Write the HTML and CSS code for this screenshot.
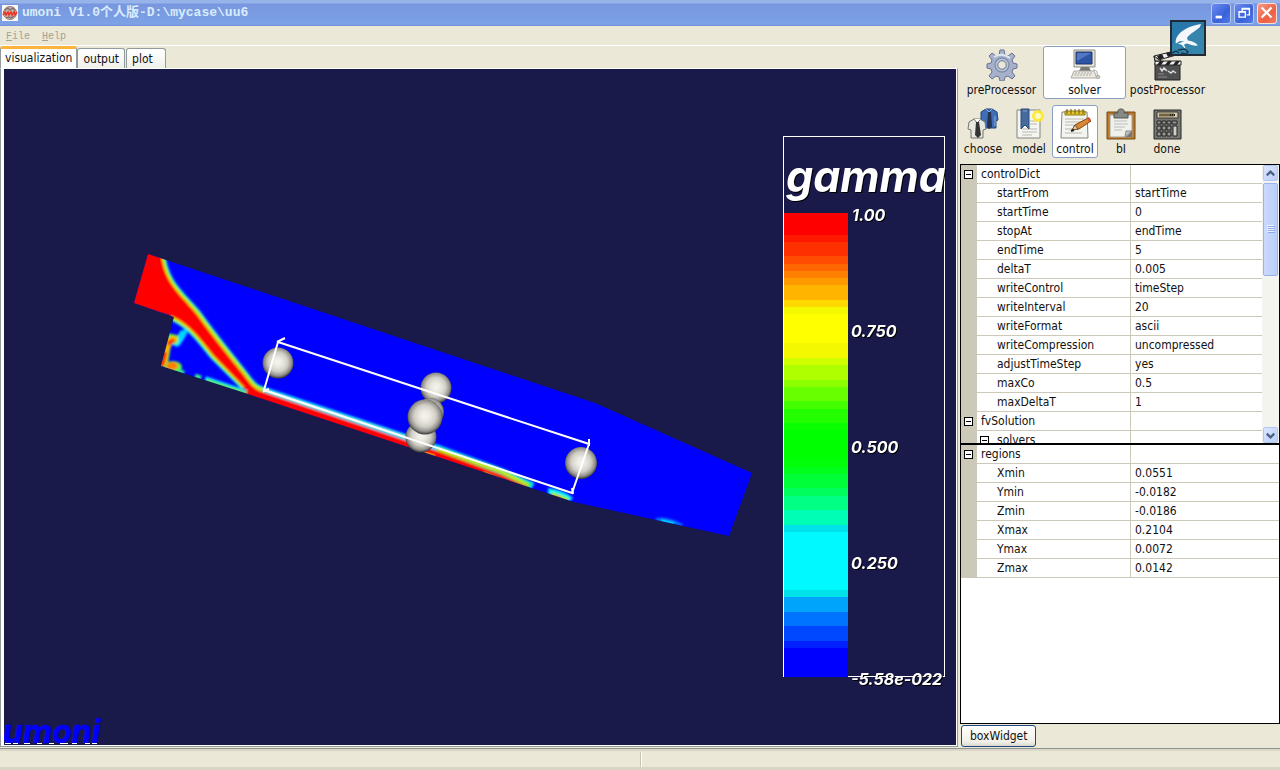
FILE: index.html
```html
<!DOCTYPE html>
<html lang="en">
<head>
<meta charset="utf-8">
<title>umoni V1.0个人版-D:\mycase\uu6</title>
<link rel="stylesheet" href="styles.css">
</head>
<body>
<div class="window">
  <header class="titlebar">
    <svg class="app-icon" viewBox="0 0 16 16" aria-hidden="true">
      <rect width="16" height="16" fill="#fbf6f2"/>
      <circle cx="8" cy="8" r="6.5" fill="#c9b4aa" stroke="#8d807c"/>
      <path d="M3 5l3-2 2 2 3-2 2 3M4 13l3-1 2 1 3-2" fill="none" stroke="#7c6a66" stroke-width="1.3"/>
      <path d="M1 10l2-3 1 3 2-3 1 3 2-3 1 3 2-3 1 3 2-3" fill="none" stroke="#ee3524" stroke-width="1.6"/>
    </svg>
    <h1 class="title">umoni V1.0个人版-D:\mycase\uu6</h1>
    <div class="window-buttons">
      <button class="win-btn" type="button" aria-label="Minimize"><svg viewBox="0 0 20 20"><path d="M4 14.500h7" stroke="#fff" stroke-width="3"/></svg></button>
      <button class="win-btn" type="button" aria-label="Restore"><svg viewBox="0 0 20 20"><path d="M8 8V5h8v7h-3M8 5.500h8M4.500 8.500h7v6h-7zM4 9h8" fill="none" stroke="#fff" stroke-width="1.500"/></svg></button>
      <button class="win-btn win-close" type="button" aria-label="Close"><svg viewBox="0 0 20 20"><path d="M4 4l11 11M15 4L4 15" stroke="#fff" stroke-width="2.400"/></svg></button>
    </div>
  </header>
  <nav class="menubar">
    <button type="button"><u>F</u>ile</button>
    <button type="button"><u>H</u>elp</button>
  </nav>

  <main class="content">
    <section class="notebook">
      <div class="tabs" role="tablist">
        <button class="tab active" type="button" role="tab" aria-selected="true">visualization</button>
        <button class="tab" type="button" role="tab" aria-selected="false">output</button>
        <button class="tab" type="button" role="tab" aria-selected="false">plot</button>
      </div>
      <div class="page">
        <svg class="scene" viewBox="4 69 952 675" preserveAspectRatio="xMinYMin meet">
          <defs>
            <radialGradient id="ball" cx=".5" cy=".47" r=".54">
              <stop offset="0" stop-color="#f4f4f2"/><stop offset=".28" stop-color="#ebe9df"/>
              <stop offset=".58" stop-color="#cfcdc5"/><stop offset=".82" stop-color="#91908b"/><stop offset="1" stop-color="#2c2c2a"/>
            </radialGradient>
            <clipPath id="body"><path d="M148 254L595 403L752 473L729 536L574 502L245 393L161 366L174 317L134 303Z"/></clipPath>
            <filter id="soft"><feGaussianBlur stdDeviation=".8"/></filter>
          </defs>
          <g clip-path="url(#body)">
            <path fill="#00f" d="M130 250h630v300H130z"/>
            <g filter="url(#soft)" stroke-linejoin="round">
              <g fill="none">
                <path d="M162 252C164 284 184 296 199 315C219 343 235 361 250 381Q255 388 263 390L440 449L500 471L533 486M244 387L213 356C200 340 190 325 171 317" stroke="#00d8ff" stroke-width="7"/>
                <path d="M162 252C164 284 184 296 199 315C219 343 235 361 250 381Q255 388 263 390M244 387L213 356C200 340 190 325 171 317M437 449L500 471L531 486" stroke="#2cf060" stroke-width="5"/>
                <path d="M162 252C164 284 184 296 199 315C219 343 235 361 250 381Q255 388 263 390M244 387L213 356C200 340 190 325 171 317M437 449L500 471L528 485" stroke="#d8e800" stroke-width="2.500"/>
              </g>
              <path fill="#f00" d="M138 240L161 252C163 284 183 296 198 316C218 344 234 362 249 382Q255 390 263 392L440 452L500 474L528 487L520 497L380 454L244 408V387L213 355C200 339 190 324 171 316L120 302Z"/>
              <path d="M263 390L434 446" stroke="#8ff4d0" stroke-width="2"/>
              <path d="M424 454L434 457" stroke="#ffe800" stroke-width="3"/>
              <path d="M484 473L514 486" stroke="#ffb400" stroke-width="2"/>
              <path d="M164 367L165 350L169 339L177 343L184 332" fill="none" stroke="#00e8ff" stroke-width="7"/>
              <path d="M163 367L166 348L169 338L178 340" fill="none" stroke="#5cf030" stroke-width="9"/>
              <path d="M163 367L166 350L170 340L177 339" fill="none" stroke="#ffb000" stroke-width="6"/>
              <path d="M162 366L165 352M168 344L174 340" stroke="#ff2800" stroke-width="4"/>
              <path d="M180 338L187 329" stroke="#00cfff" stroke-width="5"/>
              <ellipse cx="173" cy="367" rx="9" ry="6" fill="#60f040"/>
              <ellipse cx="172" cy="366" rx="6" ry="4" fill="#ff8000"/>
              <path d="M178 371L184 373M195 376L201 378" stroke="#30f080" stroke-width="5"/>
              <path d="M205 379L246 393" stroke="#00e0ff" stroke-width="6"/>
              <path d="M206 381L246 394" stroke="#60f000" stroke-width="4"/>
              <path d="M548 491Q560 492 571 500" fill="none" stroke="#00f0ff" stroke-width="6"/>
              <path d="M551 494L568 500" stroke="#a0f000" stroke-width="4"/>
              <path d="M555 496L561 498" stroke="#ff8000" stroke-width="2"/>
              <path d="M656 520Q667 518 682 526" fill="none" stroke="#0070ff" stroke-width="4"/>
              <path d="M661 521L674 524" stroke="#00e0ff" stroke-width="3"/>
            </g>
          </g>
          <circle cx="278" cy="363" r="15.500" fill="url(#ball)"/>
          <circle cx="436" cy="388" r="15.500" fill="url(#ball)"/>
          <circle cx="430" cy="412" r="14" fill="url(#ball)"/>
          <circle cx="421" cy="437" r="15.500" fill="url(#ball)"/>
          <circle cx="425" cy="417" r="17.500" fill="url(#ball)"/>
          <circle cx="581" cy="463" r="16" fill="url(#ball)"/>
          <g fill="none" stroke="#fff" stroke-width="2">
            <path d="M278 342L589 444L572 493L264 390Z"/>
            <path d="M277 342L285 338M589 439V446M264 388V391L269 389M572 488L573 494"/>
          </g>

          <g shape-rendering="crispEdges">
            <rect x="783.500" y="136.500" width="161" height="540" fill="none" stroke="#fff"/>
            <path fill="#f00" d="M784 213h64v22h-64z"/><path fill="#ff1800" d="M784 235h64v7h-64z"/>
            <path fill="#ff3000" d="M784 242h64v14h-64z"/><path fill="#ff4c00" d="M784 256h64v8h-64z"/>
            <path fill="#ff6600" d="M784 264h64v7h-64z"/><path fill="#ff8000" d="M784 271h64v7h-64z"/>
            <path fill="#ff9900" d="M784 278h64v7h-64z"/><path fill="#ffb400" d="M784 285h64v15h-64z"/>
            <path fill="#ffd800" d="M784 300h64v7h-64z"/><path fill="#f4f800" d="M784 307h64v7h-64z"/>
            <path fill="#ff0" d="M784 314h64v29h-64z"/><path fill="#f4f800" d="M784 343h64v15h-64z"/>
            <path fill="#d0ff00" d="M784 358h64v7h-64z"/><path fill="#b0ff00" d="M784 365h64v15h-64z"/>
            <path fill="#8cff00" d="M784 380h64v7h-64z"/><path fill="#68ff00" d="M784 387h64v14h-64z"/>
            <path fill="#44ff00" d="M784 401h64v8h-64z"/><path fill="#24ff00" d="M784 409h64v14h-64z"/>
            <path fill="#0aff00" d="M784 423h64v7h-64z"/><path fill="#0f0" d="M784 430h64v29h-64z"/>
            <path fill="#00ff08" d="M784 459h64v8h-64z"/><path fill="#00ff1c" d="M784 467h64v7h-64z"/>
            <path fill="#00ff38" d="M784 474h64v14h-64z"/><path fill="#00ff5c" d="M784 488h64v8h-64z"/>
            <path fill="#00ff84" d="M784 496h64v14h-64z"/><path fill="#00ffb4" d="M784 510h64v15h-64z"/>
            <path fill="#00e2ea" d="M784 525h64v7h-64z"/><path fill="#00f8ff" d="M784 532h64v58h-64z"/>
            <path fill="#00e2ea" d="M784 590h64v7h-64z"/><path fill="#00a4fa" d="M784 597h64v15h-64z"/>
            <path fill="#0074ff" d="M784 612h64v14h-64z"/><path fill="#0048ff" d="M784 626h64v15h-64z"/>
            <path fill="#0020ff" d="M784 641h64v7h-64z"/><path fill="#00f" d="M784 648h64v29h-64z"/>
          </g>
          <g class="scale-text">
            <text class="scale-title" x="786" y="192">gamma</text>
            <text x="852" y="221">1.00</text>
            <text x="851" y="337">0.750</text>
            <text x="851" y="453">0.500</text>
            <text x="851" y="569">0.250</text>
            <text x="851" y="685">-5.58e-022</text>
          </g>
          <text class="watermark" x="3" y="743">umoni</text>
          <path d="M5 743.500h6M13 743.500h5M24 743.500h6M37 743.500h5M49 743.500h5M60 743.500h8M72 743.500h5M85 743.500h5M92 743.500h5" stroke="#fff"/>
        </svg>
      </div>
    </section>

    <aside class="side">
      <div class="toolbar steps">
        <button class="tool" type="button">
          <svg viewBox="0 0 32 32"><path d="M14 1h4l1 5 3 1 4-3 3 3-3 4 1 3 4 1v4l-4 1-1 3 3 4-3 3-4-3-3 1-1 4h-4l-1-4-3-1-4 3-3-3 3-4-1-3-4-1v-4l4-1 1-3-3-4 3-3 4 3 3-1z" fill="#a6b2cb" stroke="#68748e"/><circle cx="16" cy="16" r="7" fill="#bdc7da" stroke="#8591aa" stroke-width="1.500"/><path d="M8 8q8-5 16 1" stroke="#e0e6f0" stroke-width="2" fill="none"/><circle cx="16" cy="16" r="4.200" fill="#ebe8d8" stroke="#68748e"/></svg>
          <span>preProcessor</span></button>
        <button class="tool selected" type="button" aria-pressed="true">
          <svg viewBox="0 0 32 32"><path d="M5 1h21v17H5z" fill="#e6e4da" stroke="#8d8b82"/><path d="M7 3h16v12H7z" fill="#2d55a5" stroke="#1c3568"/><path d="M8 4h14L8 12z" fill="#5479c2"/><path d="M12 18h8l2 4H10z" fill="#7b7a74"/><path d="M5 22h20l3 7H2z" fill="#ebe9e0" stroke="#aaa89f"/><path d="M6 24h17M5 26h18" stroke="#aaa89f" stroke-dasharray="2 1"/><path d="M24 21q5 0 4 4l2 3" fill="none" stroke="#aaa89f"/><ellipse cx="29" cy="28" rx="2" ry="1.500" fill="#d3d1c7" stroke="#aaa89f"/></svg>
          <span>solver</span></button>
        <button class="tool" type="button">
          <svg viewBox="0 0 32 32"><path d="M3 14h25v17H3z" fill="#505050" stroke="#222"/><path d="M3 12h26v4H3z" fill="#eee" stroke="#222"/><path d="M5 16l3-4h4l-3 4zm8 0l3-4h4l-3 4zm8 0l3-4h4l-3 4z" fill="#222"/><path d="M2 7l25-6 1 4L3 12z" fill="#eee" stroke="#222"/><path d="M5 7l5-2 2 4-5 2zm9-3l4-1 2 4-4 1zm8-2l4-1 1 4-3 1z" fill="#222"/><path d="M2 7l7 5H3z" fill="#bbb" stroke="#222"/><path d="M8 19l2 3 2-3 3 3M16 22l3 2 2-2 3 2" fill="none" stroke="#ddd" stroke-width="1.500"/><path d="M6 25h6M6 28h9" stroke="#8a8a8a"/></svg>
          <span>postProcessor</span></button>
      </div>
      <div class="toolbar tasks">
        <button class="tool" type="button">
          <svg viewBox="0 0 32 32"><path d="M14 4l5-3h6l5 3 1 8-2 1v7H14z" fill="#3e6eb5" stroke="#234779"/><path d="M19 1l3 3 3-3M14 12v7M28 8v10" stroke="#87ace0" fill="none"/><path d="M21 4h3l1 15-3 2-2-2z" fill="#263350"/><path d="M2 14l5-3h6l5 3 1 7-3 1v8H4v-8l-3-1z" fill="#e7e7e2" stroke="#74746e"/><path d="M7 11l3 4 4-4" stroke="#777" fill="#fff"/><path d="M9 14h3l2 13-3 3-3-3z" fill="#333"/></svg>
          <span>choose</span></button>
        <button class="tool" type="button">
          <svg viewBox="0 0 32 32"><path d="M4 2h23v28H4z" fill="#f5f5f1" stroke="#84847c"/><path d="M17 13h7M17 16h7M9 21h15M9 24h15M9 27h10" stroke="#b8b8b3"/><path d="M8 1h8v20l-4-4-4 4z" fill="#466a9e" stroke="#294d7d"/><path d="M10 3h4" stroke="#86a4cb"/><circle cx="25" cy="8" r="6" fill="#ffe82c" opacity=".9"/><circle cx="25" cy="8" r="3" fill="#fffac2"/></svg>
          <span>model</span></button>
        <button class="tool selected" type="button" aria-pressed="true">
          <svg viewBox="0 0 32 32"><path d="M3 4h25l1 26H2z" fill="#f4f4f0" stroke="#84847c"/><path d="M6 3h20v4H6z" fill="#e4c52e" stroke="#917b11"/><path d="M8 1v5M12 1v5M16 1v5M20 1v5M24 1v5" stroke="#685710"/><path d="M6 11h19M6 14h16M6 17h12M6 21h8M6 25h17" stroke="#b9b9b4"/><path d="M13 22l3-5 13-7 3 3-12 8z" fill="#da8733" stroke="#87430f"/><path d="M13 22l3-5 3 4z" fill="#e9d3ab" stroke="#6c5636"/><path d="M28 10l2-1 2 3-2 2z" fill="#d95136"/><path d="M12 23l3-1" stroke="#222" stroke-width="2"/></svg>
          <span>control</span></button>
        <button class="tool" type="button">
          <svg viewBox="0 0 32 32"><path d="M2 4h28v27H2z" fill="#bb7828" stroke="#754a14"/><path d="M5 7h22v22H5z" fill="#f1f1ec" stroke="#a4a098"/><path d="M9 13h13M9 16h14M9 19h11M9 22h8" stroke="#bbb"/><path d="M20 29l1-6h6z" fill="#c4c4be" stroke="#888"/><path d="M21 29l6-6v6z" fill="#777"/><path d="M9 5h4q-1-4 3-4t3 4h4v5H9z" fill="#888a85" stroke="#555753"/></svg>
          <span class="serif-i">bI</span></button>
        <button class="tool" type="button">
          <svg viewBox="0 0 32 32"><path d="M3 2h27v29H3z" fill="#777773" stroke="#292929"/><path d="M6 4h21v6H6z" fill="#d7ccae" stroke="#36352f"/><path d="M8 7h15" stroke="#726441" stroke-width="3"/><path d="M19 7h5" stroke="#222" stroke-dasharray="1 1" stroke-width="2"/><path d="M6 13h4v3H6zm5 0h4v3h-4zm5 0h4v3h-4zm5 0h5v3h-5zM6 18h4v4H6zm5 0h4v4h-4zm5 0h4v4h-4zM6 24h4v4H6zm5 0h4v4h-4zm5 0h4v4h-4z" fill="#999" stroke="#222"/><path d="M22 18h4v10h-4z" fill="#d0d0c9" stroke="#222"/></svg>
          <span>done</span></button>
      </div>

      <div class="grid-box">
        <div class="grid-scroll">
          <table class="props">
            <colgroup><col class="col-gutter"><col class="col-name"><col></colgroup>
            <tbody>
              <tr><td><button class="expander" type="button" aria-label="Collapse controlDict"></button></td><th class="root" scope="row">controlDict</th><td></td></tr>
              <tr><td></td><th scope="row">startFrom</th><td>startTime</td></tr>
              <tr><td></td><th scope="row">startTime</th><td>0</td></tr>
              <tr><td></td><th scope="row">stopAt</th><td>endTime</td></tr>
              <tr><td></td><th scope="row">endTime</th><td>5</td></tr>
              <tr><td></td><th scope="row">deltaT</th><td>0.005</td></tr>
              <tr><td></td><th scope="row">writeControl</th><td>timeStep</td></tr>
              <tr><td></td><th scope="row">writeInterval</th><td>20</td></tr>
              <tr><td></td><th scope="row">writeFormat</th><td>ascii</td></tr>
              <tr><td></td><th scope="row">writeCompression</th><td>uncompressed</td></tr>
              <tr><td></td><th scope="row">adjustTimeStep</th><td>yes</td></tr>
              <tr><td></td><th scope="row">maxCo</th><td>0.5</td></tr>
              <tr><td></td><th scope="row">maxDeltaT</th><td>1</td></tr>
              <tr><td><button class="expander" type="button" aria-label="Collapse fvSolution"></button></td><th class="root" scope="row">fvSolution</th><td></td></tr>
              <tr><td></td><th class="branch" scope="row"><button class="expander" type="button" aria-label="Collapse solvers"></button>solvers</th><td></td></tr>
            </tbody>
          </table>
        </div>
        <div class="scrollbar">
          <button class="scroll-btn" type="button" aria-label="Scroll up"><svg viewBox="0 0 14 14"><path d="M3 9l4-4 4 4" fill="none" stroke="#4d6185" stroke-width="2.500"/></svg></button>
          <div class="scroll-track"><div class="thumb"><svg viewBox="0 0 8 8"><path d="M0 .5h7M0 2.500h7M0 4.500h7M0 6.500h7" stroke="#eef4fe"/><path d="M1 1.500h7M1 3.500h7M1 5.500h7M1 7.500h7" stroke="#8caae6"/></svg></div></div>
          <button class="scroll-btn" type="button" aria-label="Scroll down"><svg viewBox="0 0 14 14"><path d="M3 5l4 4 4-4" fill="none" stroke="#4d6185" stroke-width="2.500"/></svg></button>
        </div>
      </div>

      <div class="grid-box">
        <div class="grid-scroll">
          <table class="props">
            <colgroup><col class="col-gutter"><col class="col-name"><col></colgroup>
            <tbody>
              <tr><td><button class="expander" type="button" aria-label="Collapse regions"></button></td><th class="root" scope="row">regions</th><td></td></tr>
              <tr><td></td><th scope="row">Xmin</th><td>0.0551</td></tr>
              <tr><td></td><th scope="row">Ymin</th><td>-0.0182</td></tr>
              <tr><td></td><th scope="row">Zmin</th><td>-0.0186</td></tr>
              <tr><td></td><th scope="row">Xmax</th><td>0.2104</td></tr>
              <tr><td></td><th scope="row">Ymax</th><td>0.0072</td></tr>
              <tr><td></td><th scope="row">Zmax</th><td>0.0142</td></tr>
            </tbody>
          </table>
        </div>
      </div>
      <button class="box-widget" type="button">boxWidget</button>
    </aside>
  </main>

  <footer class="statusbar"><div></div><div></div></footer>

  <svg class="bird" viewBox="0 0 36 36" aria-hidden="true">
    <rect x="1" y="1" width="34" height="34" fill="#3585ac" stroke="#202b33" stroke-width="2"/>
    <path d="M2 2h32v5L12 18L2 24z" fill="#2474aa" opacity=".7"/>
    <path d="M31 4C24 5 15 8 10 13C6 17 5 21 6 23.500L10 21L14 21.500L8 23.500L12 25L16.500 30.500L14 24.500L17 23.500C21 25 24 26 28 25.500C25 22 22 21 18 20.500L17 18C19 14 26 11 30 7Z" fill="#f4f8fb"/>
    <path d="M2 33l4-2 3 2m-1-3l7-1 3 3-2 2-5-1" fill="none" stroke="#163c4e" stroke-width="1.500"/>
  </svg>
</div>
</body>
</html>
```
FILE: styles.css
```css
* { box-sizing: border-box; }
body {
  margin: 0;
  font: 12px/16px "DejaVu Sans Condensed", "DejaVu Sans", sans-serif;
  color: #111;
  background: #ebe8d8;
}
button { font: inherit; color: inherit; padding: 0; margin: 0; border: 0; background: none; }
svg { display: block; }

.window { position: relative; display: flex; flex-direction: column; height: 100vh; overflow: hidden; }

.titlebar {
  display: flex; align-items: center; gap: 4px; flex: none; height: 26px; padding: 0 3px 0 2px;
  background: linear-gradient(#97b4ea 0, #97b4ea 3px, #7896df 4px, #7c9fe4 20px, #7ea2e6 24px, #7590d8 26px);
}
.app-icon { width: 16px; height: 16px; }
.title {
  flex: 1; margin: 0; color: #d8ecfc; white-space: nowrap;
  font: bold 13px/18px "Liberation Mono", "Noto Sans CJK SC", monospace;
}
.window-buttons { display: flex; gap: 3px; }
.win-btn {
  width: 20px; height: 21px; border: 1px solid #b4c8f4; border-radius: 3px;
  background: linear-gradient(135deg, #6d8df0, #3a62d8 60%, #4f7aea);
}
.win-close { background: linear-gradient(135deg, #f59a80, #ee6045 60%, #f07a60); border-color: #fbe0d8; }

.menubar {
  display: flex; gap: 12px; flex: none; height: 20px; padding: 2px 6px 0; border-bottom: 1px solid #fff;
  font: 10px/16px "Liberation Mono", monospace; color: #a5a292;
}

.content { flex: 1; min-height: 0; display: grid; grid-template-columns: minmax(0, 3fr) minmax(320px, 1fr); }
.notebook { display: flex; flex-direction: column; min-width: 0; min-height: 0; padding: 0 2px 1px 0; }
.tabs { display: flex; align-items: flex-end; flex: none; height: 22px; }
.tab {
  height: 20px; margin-right: 1px; padding: 1px 5px 0; white-space: nowrap;
  border: 1px solid #919b9c; border-bottom: 0; border-radius: 3px 3px 0 0;
  background: linear-gradient(#fff, #f0f0ea);
}
.tab:last-child { padding: 1px 12px 0 5px; }
.tab.active {
  height: 22px; margin-right: 0; padding: 0 4px 2px; border-top: 3px solid #fdb43a; background: #fff;
}
.page {
  flex: 1; min-height: 0; border: 1px solid #919b9c; border-top-color: #fff; padding: 0 1px 1px 3px; background: #fff;
}
.scene { width: 100%; height: 100%; background: #1a1a4a; }
.scale-text {
  font: italic 700 16px Inter, "Open Sans", sans-serif; font-feature-settings: "cv11";
  fill: #fff; filter: drop-shadow(1px 1px 0 #000);
}
.scale-title { font-size: 43px; }
.watermark {
  font: italic 700 32px Inter, "Open Sans", sans-serif; fill: #00f; stroke: #10108c; stroke-width: 1px; paint-order: stroke;
}

.side { display: flex; flex-direction: column; min-width: 0; min-height: 0; }
.toolbar { display: flex; flex: none; }
.tasks { margin: 6px 0; }
.tool {
  width: 46px; height: 53px; padding-top: 2px; border: 1px solid transparent; border-radius: 3px;
  display: flex; flex-direction: column; align-items: center; justify-content: flex-start; gap: 1px; white-space: nowrap;
}
.steps .tool { width: 83px; }
.tool svg { width: 32px; height: 32px; flex: none; }
.tool.selected { background: #fff; border-color: #89a0c4; }
.serif-i { font-family: "DejaVu Sans Condensed", "DejaVu Sans", sans-serif; }

.grid-box {
  flex: 1 1 0; min-height: 0; display: flex; background: #fff; border: 1px solid #000;
}
.grid-scroll { flex: 1; min-width: 0; overflow: hidden; }
.props { width: 100%; table-layout: fixed; border-collapse: separate; border-spacing: 0; }
.col-gutter { width: 16px; }
.col-name { width: 154px; }
.props th, .props td {
  height: 19px; padding: 0 4px; font-weight: normal; text-align: left; line-height: 18px; white-space: nowrap;
  border-bottom: 1px solid #cdc9b8;
}
.props th { padding-left: 20px; border-right: 1px solid #cdc9b8; }
.props th.root { padding-left: 4px; }
.props th.branch { padding-left: 3px; }
.props td:first-child { padding: 0 3px; background: #cdc9b8; }
.expander {
  display: block; width: 9px; height: 9px; border: 1px solid #000;
  background: linear-gradient(#000, #000) center / 5px 1px no-repeat #fff;
}
.branch .expander { display: inline-block; margin-right: 8px; }

.scrollbar { display: flex; flex-direction: column; flex: none; width: 17px; padding-left: 1px; background: #f4f4ef; }
.scroll-btn {
  width: 15px; height: 16px; flex: none; border: 1px solid #b2c6f2; border-radius: 2px;
  background: linear-gradient(135deg, #dce7ff, #b9cdf8);
}
.scroll-track { flex: 1; min-height: 0; padding-top: 2px; }
.thumb {
  display: flex; align-items: center; justify-content: center; width: 15px; height: 38%;
  border: 1px solid #98b2ea; border-radius: 2px; background: linear-gradient(90deg, #cbdafe, #b9cdfa);
}
.thumb svg { width: 8px; height: 8px; }

.box-widget {
  align-self: flex-start; flex: none; height: 22px; margin: 1px; padding: 0 8px;
  border: 1px solid #1c4a80; border-radius: 3px; background: linear-gradient(#fff, #f0efe8 80%, #dcd8cc);
}

.statusbar {
  display: flex; flex: none; height: 22px; border-top: 1px solid #8f9690; border-bottom: 3px solid #d8d5c4;
  box-shadow: inset 0 2px #dad7c8;
}
.statusbar div { flex: 1; margin-top: 3px; }
.statusbar div + div { border-left: 1px solid #c8c4b2; box-shadow: inset 1px 0 #fff; }

.bird { position: absolute; top: 20px; right: 74px; width: 36px; height: 36px; }
```
